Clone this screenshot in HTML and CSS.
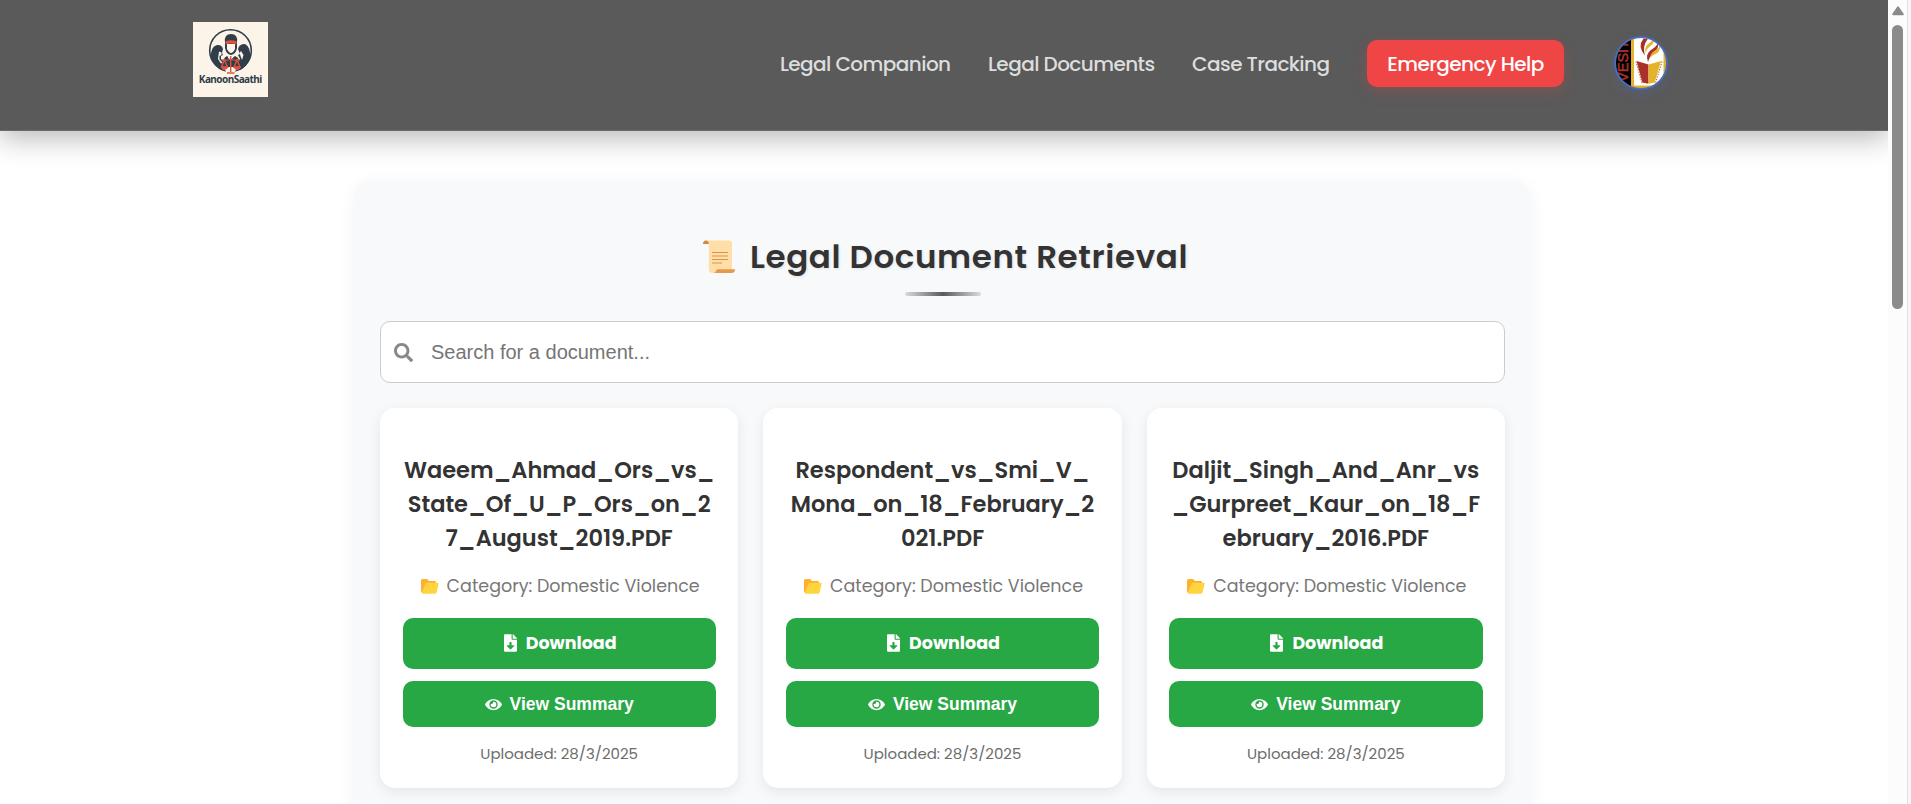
FILE: index.html
```html
<!DOCTYPE html>
<html lang="en">
<head>
<meta charset="utf-8">
<title>KanoonSaathi - Legal Document Retrieval</title>
<link rel="stylesheet" href="styles.css">
</head>
<body>
<svg width="0" height="0" class="defs">
  <symbol id="folder" viewBox="0 0 18 15">
    <path d="M0 1.5Q0 0 1.5 0H6l2 1.9h5.6Q15 1.9 15 3.3V14H2Q0 14 0 12z" fill="#ffb02e"/>
    <path d="M4.2 5Q4.6 3.8 5.8 3.8h10.8q1.3 0 1 1.3l-2 8.2q-.4 1.5-1.8 1.5H1.8Q.4 14.8.9 13.6z" fill="#ffd43f"/>
  </symbol>
  <symbol id="file-down" viewBox="0 0 384 512">
    <path fill="#fff" d="M224 136V0H24C10.700 0 0 10.700 0 24v464c0 13.300 10.700 24 24 24h336c13.300 0 24-10.700 24-24V160H248c-13.200 0-24-10.800-24-24zm76.450 211.360l-96.420 95.700c-6.650 6.610-17.390 6.610-24.040 0l-96.420-95.700C73.420 337.290 80.540 320 94.820 320H160v-80c0-8.840 7.160-16 16-16h32c8.840 0 16 7.160 16 16v80h65.180c14.280 0 21.400 17.290 11.270 27.360zM377 105L279.100 7c-4.500-4.500-10.600-7-17-7H256v128h128v-6.100c0-6.300-2.500-12.400-7-16.900z"/>
  </symbol>
  <symbol id="eye" viewBox="0 0 576 512">
    <path fill="#fff" d="M572.520 241.400C518.290 135.590 410.930 64 288 64S57.680 135.640 3.480 241.410a32.350 32.350 0 0 0 0 29.190C57.710 376.410 165.070 448 288 448s230.320-71.640 284.520-177.410a32.350 32.350 0 0 0 0-29.190zM288 400a144 144 0 1 1 144-144 143.930 143.930 0 0 1-144 144zm0-240a95.310 95.310 0 0 0-25.310 3.790 47.850 47.850 0 0 1-66.900 66.900A95.780 95.780 0 1 0 288 160z"/>
  </symbol>
</svg>

<div class="window">
  <div class="page">
    <header class="navbar">
      <svg class="logo" viewBox="0 0 75 75">
        <rect width="75" height="75" fill="#fcf4e8"/>
        <circle cx="37.500" cy="28.500" r="20.800" fill="#fcf4e8" stroke="#2f3e48" stroke-width="1.600"/>
        <path d="M18 36q-1-11 6-13 5-.5 6 4l-1 4 1 2-2 1v3l3 3-2 8q-8-4-11-12zM57 36q1-11-5-14-6 0-7 5l2 5-2 1 2 4-3 4 3 7q8-4 10-12z" fill="#2f3e48"/>
        <path d="M30 46q-1-10 4-12l4 3 4-3q6 2 4 12l-8 4z" fill="#2f3e48"/>
        <path d="M32 20q-1-8 6-8t6 8v6q-1 6-6 7-5-1-6-7z" fill="#2f3e48"/>
        <path d="M34 22h8v5q-2 4-4 4t-4-4z" fill="#fcf4e8"/>
        <path d="M26 29.500l2.500 1v2.500l-2 1v3.500l3 3-1.500 1-3-4.500zM48 29l-1.500 2 1 3 1.500 4 1.500-5zM35 33h5v3l-2.500 1.500L35 36z" fill="#fcf4e8"/>
        <path d="M32.500 19.200q5.500-2 11 0v3q-5.500-1.500-11 0z" fill="#e2513c"/>
        <path d="M31 45h13l-2 5h-9z" fill="#fcf4e8"/>
        <path d="M37.700 34v16M34 51h7.500M29 38q5 1 8.700-1 3.700 2 8.700 1M31.500 38l-3 7h6zM44 38l-3 7h6z" fill="none" stroke="#e2513c" stroke-width="1.400"/>
        <path d="M27.700 44.500h7.500q-1 3.200-3.700 3.200t-3.800-3.200zM40.300 44.500h7.500q-1 3.200-3.700 3.200t-3.800-3.200z" fill="#e2513c"/>
        <text x="5.800" y="61.300" textLength="63.500" class="logo-name">KanoonSaathi</text>
      </svg>
      <nav class="links">
        <a>Legal Companion</a>
        <a>Legal Documents</a>
        <a>Case Tracking</a>
        <a class="emergency">Emergency Help</a>
        <svg class="avatar" viewBox="0 0 54 54">
          <clipPath id="round"><circle cx="27" cy="27" r="25.500"/></clipPath>
          <g clip-path="url(#round)">
            <rect width="54" height="54" fill="#fff"/>
            <rect width="17" height="54" fill="#000"/>
            <path d="M17 0h3v49.500h34V54H17zM49.500 14H54v36h-4.500z" fill="#e3b42b"/>
            <text transform="translate(14 46) rotate(-90)" textLength="42" lengthAdjust="spacingAndGlyphs" class="avatar-name">VESIT</text>
            <path d="M22.500 25l12 3.500v19.300l-6.200-1.300z" fill="#a9302a"/>
            <path d="M47 25l-12.500 3.500v19.300l6.200-1.300z" fill="#e3b42b"/>
            <path d="M22 25.500l6 21.500M48 25.500L41.500 47" stroke="#c07030" stroke-width="1.200" stroke-dasharray="1.300 1.300" fill="none"/>
            <path d="M31 19.500q-8-9-1.500-17l4.500 0q-6 8-3 17zM34 26q-3-8 3-12 5-3 7-6.500 1 5-4 9-4 3-6 9.500z" fill="#a9302a"/>
            <path d="M31.500 17q-1.500-7 4-10 3-2 4-4.500 1.500 4-3 7.500-4 2.500-5 7zM36 21.500q1-5 5-7 4-2 5-4.500.5 5-3.500 7.500-3 1-6.500 4z" fill="#e3b42b"/>
          </g>
          <circle cx="27" cy="27" r="26" fill="none" stroke="#4b6cc0" stroke-width="2"/>
        </svg>
      </nav>
    </header>

    <main class="panel">
      <h1 class="title">
        <svg class="scroll" viewBox="0 0 32 34">
          <path d="M3 .5h23Q29 .5 29 4v26l-5 3H9q-3.200-.5-3.200-4V4Q5.800 1.500 3 .5z" fill="#ffdea7"/>
          <path d="M0 4Q0 .8 3 .6 5.800 1 5.800 4z" fill="#d3883e"/>
          <path d="M9 12.500h16M9 16h16M9 19.500h16M9 23h10" stroke="#dd9447" stroke-width="1.200"/>
          <path d="M14 29.300h18q0 3.700-3.500 3.700H11q2-1 3-3.700z" fill="#e39a4a"/>
        </svg>
        <span>Legal Document Retrieval</span>
      </h1>
      <div class="rule"></div>
      <label class="search">
        <svg class="lens" viewBox="0 0 512 512"><path fill="#888" d="M505 442.700L405.300 343c-4.500-4.500-10.600-7-17-7H372c27.600-35.300 44-79.700 44-128C416 93.100 322.900 0 208 0S0 93.100 0 208s93.100 208 208 208c48.300 0 92.700-16.400 128-44v16.300c0 6.400 2.500 12.500 7 17l99.700 99.700c9.400 9.400 24.600 9.400 33.900 0l28.300-28.300c9.400-9.400 9.400-24.600.1-34zM208 336c-70.700 0-128-57.200-128-128 0-70.700 57.200-128 128-128 70.700 0 128 57.200 128 128 0 70.700-57.200 128-128 128z"/></svg>
        <span>Search for a document...</span>
      </label>

      <section class="cards">
        <article class="card">
          <h2>Waeem_Ahmad_Ors_vs_State_Of_U_P_Ors_on_27_August_2019.PDF</h2>
          <p class="category"><svg><use href="#folder"/></svg><span>Category: Domestic Violence</span></p>
          <a class="button download"><svg><use href="#file-down"/></svg><span>Download</span></a>
          <a class="button summary"><svg><use href="#eye"/></svg><span>View Summary</span></a>
          <p class="date">Uploaded: 28/3/2025</p>
        </article>
        <article class="card">
          <h2>Respondent_vs_Smi_V_<wbr>Mona_on_18_February_2021.PDF</h2>
          <p class="category"><svg><use href="#folder"/></svg><span>Category: Domestic Violence</span></p>
          <a class="button download"><svg><use href="#file-down"/></svg><span>Download</span></a>
          <a class="button summary"><svg><use href="#eye"/></svg><span>View Summary</span></a>
          <p class="date">Uploaded: 28/3/2025</p>
        </article>
        <article class="card">
          <h2>Daljit_Singh_And_Anr_vs_Gurpreet_Kaur_on_18_February_2016.PDF</h2>
          <p class="category"><svg><use href="#folder"/></svg><span>Category: Domestic Violence</span></p>
          <a class="button download"><svg><use href="#file-down"/></svg><span>Download</span></a>
          <a class="button summary"><svg><use href="#eye"/></svg><span>View Summary</span></a>
          <p class="date">Uploaded: 28/3/2025</p>
        </article>
      </section>
    </main>
  </div>
  <aside class="scrollbar">
    <svg class="arrow" viewBox="0 0 12 10"><path d="M6 1.200L10.800 8.200H1.200z" fill="#8b8b8b" stroke="#8b8b8b" stroke-width="2" stroke-linejoin="round"/></svg>
    <div class="thumb"></div>
  </aside>
  <div class="edge"></div>
</div>
</body>
</html>
```
FILE: styles.css
```css
* { box-sizing: border-box; }
body {
  margin: 0;
  overflow: hidden;
  background: #fff;
  font-family: Poppins, Inter, sans-serif;
}
.defs { position: absolute; }
h1, h2, p { margin: 0; }
svg { display: block; flex: none; }

.window { display: flex; height: 804px; overflow: hidden; }
.page { width: 1888px; flex: none; overflow: hidden; }

.navbar {
  display: flex;
  justify-content: space-between;
  align-items: flex-start;
  height: 131px;
  padding: 22px 220px 0 193px;
  background: #5a5a5a;
  border-bottom: 1px solid #6b6b6b;
  box-shadow: 0 8px 26px rgba(0, 0, 0, .27);
}
.logo { width: 75px; height: 75px; }
.logo-name { font: 700 10px "Noto Sans", sans-serif; fill: #2f3e48; }
.links {
  display: flex;
  align-items: center;
  padding-top: 14px;
  font-size: 20px;
  font-weight: 500;
  line-height: 30px;
  letter-spacing: -.56px;
  color: #ddd;
  white-space: nowrap;
}
.links a { margin-right: 37.500px; padding-top: 1px; }
.links .emergency {
  width: 197px;
  height: 47px;
  margin-right: 50px;
  border-radius: 10px;
  background: #ef4545;
  color: #fff;
  line-height: 46px;
  text-align: center;
  box-shadow: 0 4px 15px rgba(239, 68, 68, .25);
}
.avatar {
  width: 54px;
  height: 54px;
  border-radius: 50%;
  box-shadow: 0 4px 12px rgba(75, 108, 192, .25);
}
.avatar-name {
  font: 15px "Liberation Sans", sans-serif;
  fill: #a9302a;
  stroke: #a9302a;
  stroke-width: .5px;
  letter-spacing: 0;
}

.panel {
  width: 1175px;
  height: 700px;
  margin: 49px 0 0 355px;
  padding: 52px 25px 0;
  border-radius: 16px;
  background: #f8f9fb;
  box-shadow: 0 4px 19px rgba(0, 0, 0, .05);
}
.title {
  display: flex;
  justify-content: center;
  align-items: center;
  gap: 15px;
  height: 48px;
  padding: 2px 0 0 6px;
  font-size: 32.500px;
  font-weight: 600;
  line-height: 48px;
  letter-spacing: .625px;
  color: #333;
  text-shadow: 1px 1px 3px rgba(0, 0, 0, .1);
}
.scroll { width: 32px; height: 34px; }
.rule {
  width: 76px;
  height: 4px;
  margin: 12px auto 25px;
  border-radius: 2px;
  background: linear-gradient(90deg, #dcdcdd, #5a5a5a, #dcdcdd);
}
.search {
  display: flex;
  align-items: center;
  gap: 18px;
  height: 62px;
  padding-left: 13px;
  border: 1px solid #ccc;
  border-radius: 10px;
  background: #fff;
  color: #757575;
  font: 20px "Liberation Sans", sans-serif;
}
.lens { width: 19px; height: 19px; }

.cards {
  display: grid;
  grid-template-columns: repeat(3, minmax(0, 1fr));
  gap: 25px;
  margin-top: 25px;
}
.card {
  height: 380px;
  padding: 45px 22.500px 0;
  border-radius: 15px;
  background: #fff;
  text-align: center;
  box-shadow: 0 4px 13px rgba(0, 0, 0, .08);
}
.card h2 {
  color: #333;
  font-size: 22.500px;
  font-weight: 600;
  line-height: 34px;
  word-break: break-all;
}

.category {
  display: flex;
  justify-content: center;
  align-items: center;
  gap: 8px;
  margin: 18px 0 19px;
  padding-left: 2px;
  color: #777;
  font-size: 17.500px;
  line-height: 26px;
  white-space: nowrap;
}
.category svg { width: 18px; height: 15px; margin-top: 1px; }
.button {
  display: flex;
  justify-content: center;
  align-items: center;
  border-radius: 10px;
  background: #28a745;
  color: #fff;
  font-weight: 700;
}
.download {
  gap: 9px;
  height: 51px;
  padding: 0 0 1px 2px;
  font-size: 17.500px;
}
.download svg { width: 13px; height: 18px; }
.summary {
  gap: 8px;
  height: 46px;
  margin-top: 12px;
  font: 700 17.500px "Liberation Sans", sans-serif;
}
.summary svg { width: 17px; height: 15px; }
.date {
  margin-top: 16px;
  color: #6c6c6c;
  font-size: 15px;
  line-height: 22px;
}

.scrollbar {
  display: flex;
  flex-direction: column;
  align-items: center;
  width: 19px;
  padding-top: 6px;
  background: #fcfcfc;
}
.arrow { width: 12px; height: 10px; }
.thumb {
  width: 11px;
  height: 284px;
  margin-top: 9px;
  border-radius: 6px;
  background: #8b8b8b;
}
.edge { width: 4px; border-left: 1px solid #e2e2e2; background: #f7f7f7; }
```
